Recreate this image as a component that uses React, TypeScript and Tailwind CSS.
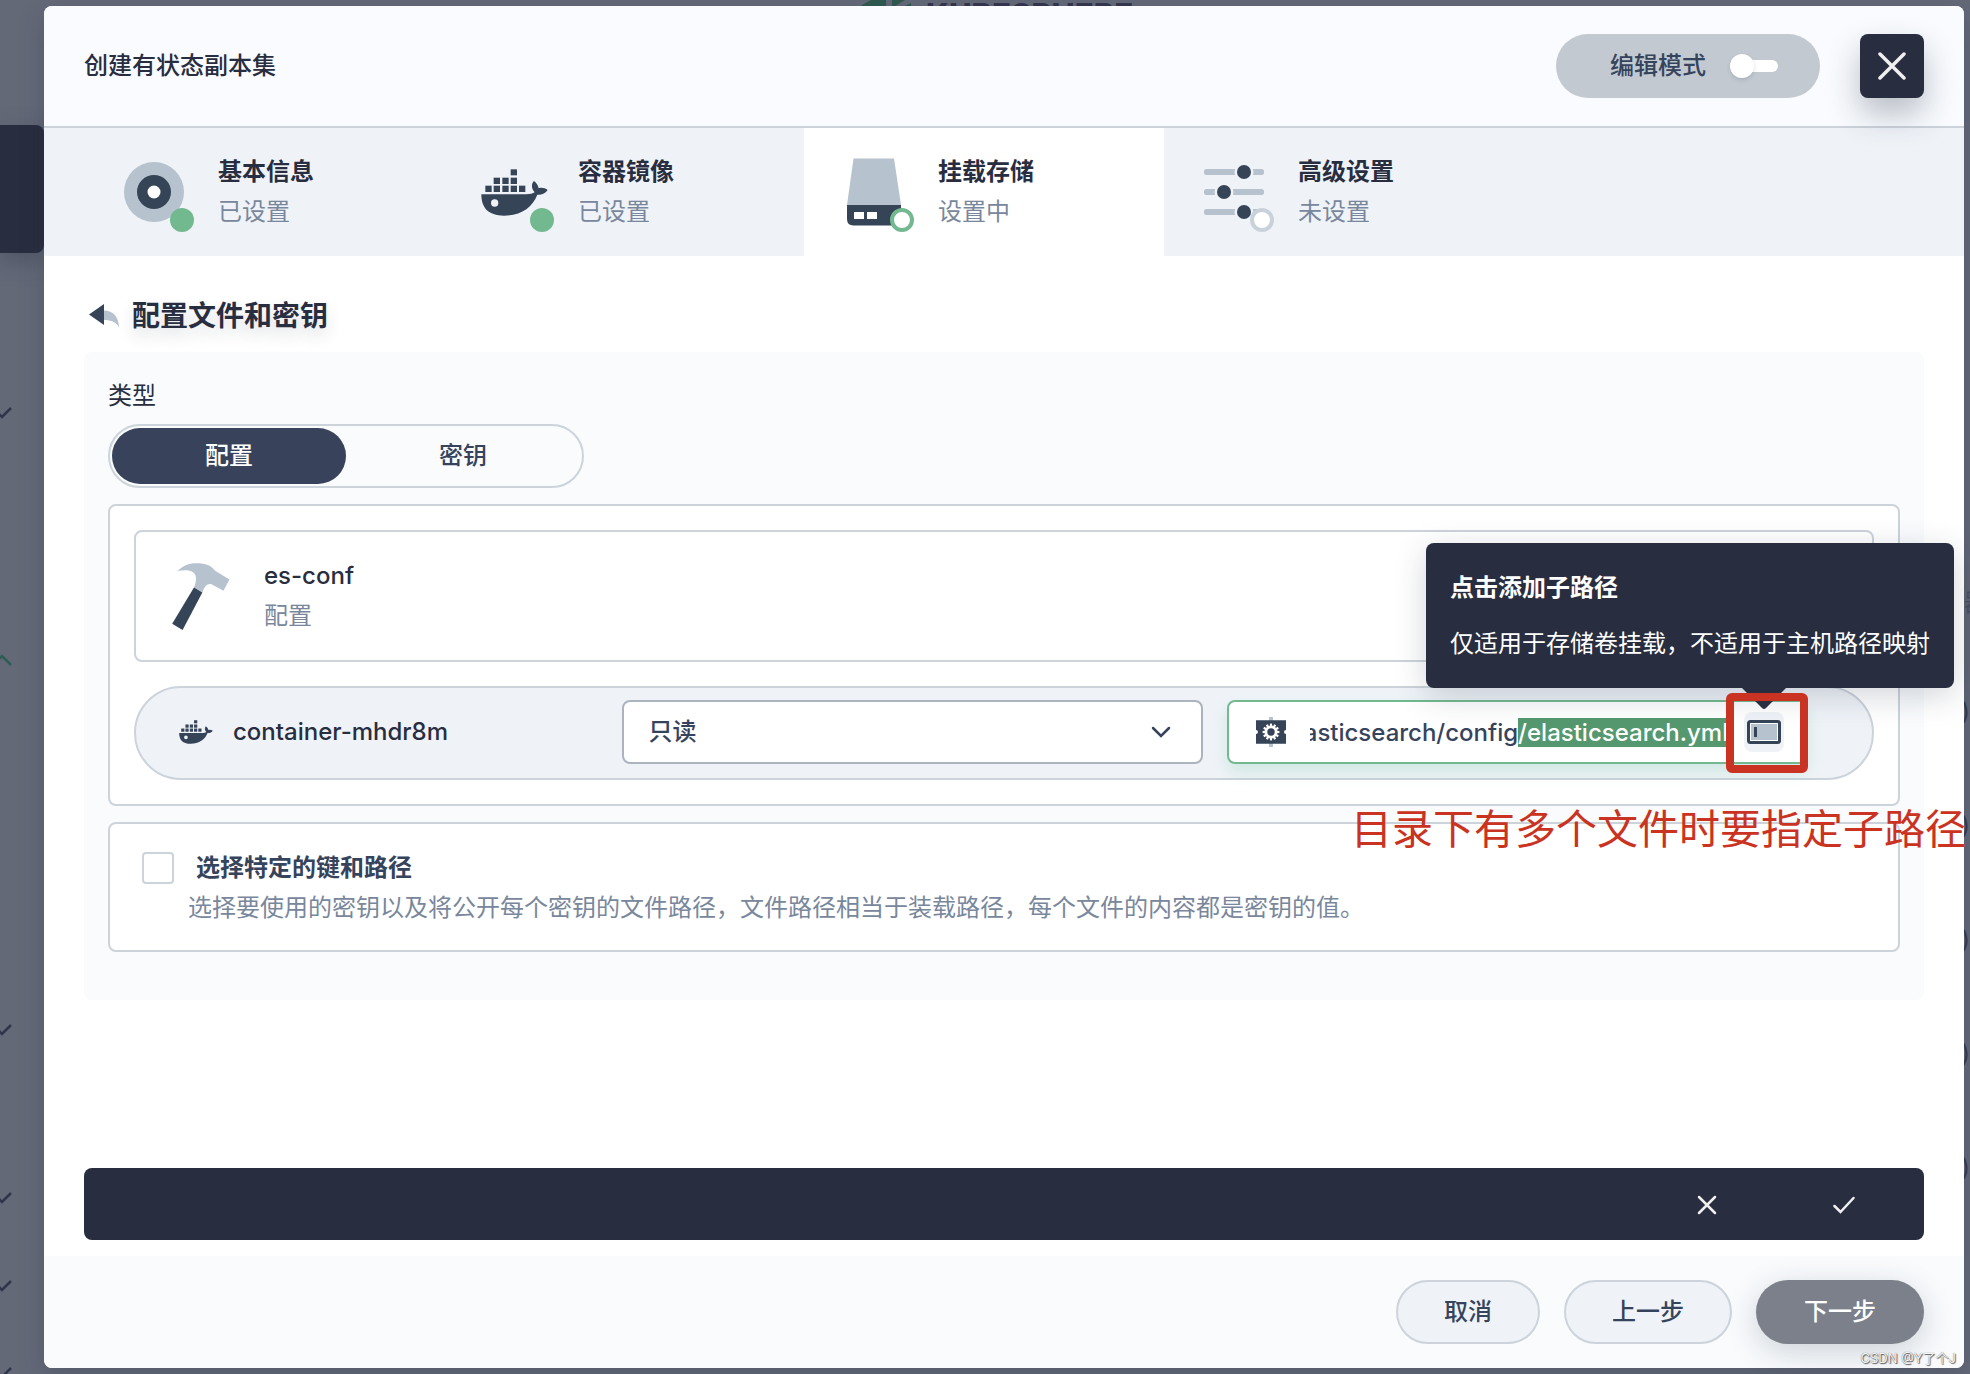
import { useEffect, useRef, useState } from "react";
import type { ReactNode } from "react";

function DockerIcon({ className }: { className?: string }) {
  return (
    <svg viewBox="61 86 201 141" className={className} fill="#364458" aria-hidden="true">
      <rect x="150" y="87" width="19" height="18" />
      {[99, 125, 150].map((x) => (
        <rect key={x} x={x} y="112" width="19" height="19" />
      ))}
      {[74, 99, 125, 150, 175].map((x) => (
        <rect key={x} x={x} y="136" width="19" height="19" />
      ))}
      <path
        fillRule="evenodd"
        d="M62 162H196C208 162 217 160 222 156C212 145 211 131 220 122C229 129 233 137 234 144C243 141 253 143 261 149C255 159 243 164 230 163C215 202 180 226 130 226C82 226 62 202 62 162ZM102 177a11 11 0 1 0 0 22a11 11 0 1 0 0-22Z"
      />
    </svg>
  );
}

function DiscIcon() {
  return (
    <svg viewBox="0 0 60 60" className="size-[60px]" aria-hidden="true">
      <circle cx="30" cy="30" r="30" fill="#b6c2cd" />
      <circle cx="30" cy="30" r="17" fill="#364458" />
      <circle cx="30" cy="30" r="6.5" fill="#fff" />
    </svg>
  );
}

function StorageIcon() {
  return (
    <svg viewBox="0 0 54 68" className="h-[68px] w-[54px]" aria-hidden="true">
      <path d="M6.5 0.5H47L54 47H0Z" fill="#b6c2cd" />
      <path d="M0 47H54V61Q54 67.5 47.500 67.500H6.500Q0 67.500 0 61Z" fill="#364458" />
      <rect x="7" y="54" width="10" height="7" fill="#fff" />
      <rect x="20" y="54" width="10" height="7" fill="#fff" />
    </svg>
  );
}

function SlidersIcon() {
  const rows = [
    { y: 7, x: 40 },
    { y: 27, x: 20 },
    { y: 47, x: 40 },
  ];
  return (
    <svg viewBox="0 0 60 54" className="h-[54px] w-[60px]" aria-hidden="true">
      {rows.map((r) => (
        <g key={r.y}>
          <rect x="0" y={r.y - 3} width="60" height="6" rx="2.500" fill="#b6c2cd" />
          <circle cx={r.x} cy={r.y} r="9.500" fill="#eff3f8" />
          <circle cx={r.x} cy={r.y} r="7" fill="#364458" />
        </g>
      ))}
    </svg>
  );
}

function BackIcon() {
  return (
    <svg viewBox="0 0 30 24" className="h-6 w-[30px]" aria-hidden="true">
      <path d="M15 6.500C24 6.500 30 13 30 23.500C27.500 18 22 16 15 16Z" fill="#b6c2cd" />
      <path d="M15 0V21L0 10.500Z" fill="#364458" />
    </svg>
  );
}

function HammerIcon() {
  return (
    <svg viewBox="38 38 172 200" className="h-[67px] w-[58px]" aria-hidden="true">
      <path
        d="M54 62C74 42 96 38 118 39C140 40 155 47 166 61L209 87L191 121L154 101C142 99 134 108 128 126L103 111C112 90 112 72 98 64C84 58 68 60 54 62Z"
        fill="#b6c2cd"
      />
      <path d="M103 111L128 126L69 238L38 219Z" fill="#364458" />
    </svg>
  );
}

function GearIcon() {
  const teeth = [0, 30, 60, 90, 120, 150];
  return (
    <svg viewBox="0 0 30 30" className="size-[30px] shrink-0" aria-hidden="true">
      <rect x="13" y="0" width="4" height="30" fill="#b6c2cd" />
      <path d="M0 3.300H30V13A2 2 0 0 0 30 17V26.700H0V17A2 2 0 0 0 0 13Z" fill="#364458" />
      {teeth.map((a) => (
        <rect
          key={a}
          x="13.900"
          y="6.600"
          width="2.200"
          height="16.800"
          fill="#fff"
          transform={`rotate(${a} 15 15)`}
        />
      ))}
      <circle cx="15" cy="15" r="6.500" fill="#fff" />
      <circle cx="15" cy="15" r="3.700" fill="#364458" />
    </svg>
  );
}

function SubPathIcon() {
  return (
    <svg viewBox="0 0 34 24" className="h-6 w-[34px]" aria-hidden="true">
      <rect x="1.500" y="1.500" width="31" height="21" rx="2" fill="#fff" stroke="#364458" strokeWidth="3" />
      <rect x="4" y="4" width="26" height="16" fill="#b6c2cd" />
      <rect x="7" y="7" width="3" height="10" fill="#364458" />
    </svg>
  );
}

type StepState = "done" | "current" | "todo";

function Step({ icon, title, status, state }: { icon: ReactNode; title: string; status: string; state: StepState }) {
  const dot = {
    done: "bg-[#72b98f]",
    current: "border-4 border-[#72b98f] bg-white",
    todo: "border-4 border-[#c9d1da] bg-white",
  }[state];
  return (
    <button
      type="button"
      className={`flex h-32 w-[360px] items-center gap-6 pl-[30px] text-left ${state === "current" ? "bg-white" : ""}`}
    >
      <span className="relative flex size-20 items-center justify-center">
        {icon}
        <span className={`absolute right-0 bottom-0 size-6 rounded-full ${dot}`} />
      </span>
      <span className="flex flex-col">
        <span className="h-10 text-2xl leading-10 font-semibold text-[#282d3f]">{title}</span>
        <span className="h-10 text-2xl leading-10 text-[#79879c]">{status}</span>
      </span>
    </button>
  );
}

function Backdrop() {
  return (
    <div className="absolute inset-0 overflow-hidden" aria-hidden="true">
      <div className="absolute top-[125px] left-0 h-32 w-11 rounded-r-lg bg-[#282d3f] shadow-[0_8px_24px_rgba(40,45,63,0.35)]" />
      {[413, 1030, 1198, 1286, 1373].map((y) => (
        <svg key={y} viewBox="0 0 20 12" className="absolute -left-2 h-3 w-5" style={{ top: y - 6 }}>
          <path d="M1 1L10 10L19 1" fill="none" stroke="#2f364b" strokeWidth="2.500" />
        </svg>
      ))}
      <svg viewBox="0 0 20 12" className="absolute top-[654px] -left-2 h-3 w-5">
        <path d="M1 11L10 2L19 11" fill="none" stroke="#2f5c54" strokeWidth="2.500" />
      </svg>
      <svg viewBox="0 0 50 6" className="absolute top-0 left-[862px] h-[6px] w-[50px]">
        <path d="M0 6V5L9 0H24V6Z" fill="#2f5950" />
        <path d="M30 6V0H43L33 6ZM43 6L49 3V6Z" fill="#2f5950" />
      </svg>
      <div className="absolute top-[-5px] left-[926px] font-[Inter] text-[31px] leading-10 font-extrabold text-[#34344e]">
        KUBESPHERE
      </div>
      {[712, 826, 940, 1054, 1168].map((y) => (
        <span
          key={y}
          className="absolute right-0 text-2xl leading-6 text-[#343a50]"
          style={{ top: y - 12 }}
        >
          )
        </span>
      ))}
      <span className="absolute top-[591px] right-[-18px] text-2xl leading-6 text-[#4c5265]">器</span>
    </div>
  );
}

function PathField() {
  const path = "/usr/share/elasticsearch/config/elasticsearch.yml";
  const [value, setValue] = useState(path);
  const ref = useRef<HTMLInputElement>(null);

  useEffect(() => {
    const el = ref.current;
    if (!el) return;
    el.focus({ preventScroll: true });
    el.setSelectionRange(path.lastIndexOf("/"), path.length);
    el.scrollLeft = el.scrollWidth;
  }, []);

  return (
    <div className="flex h-16 min-w-0 items-center rounded-lg border-2 border-[#72b98f] bg-white pr-[22px] pl-[27px] shadow-[0_8px_16px_rgba(85,188,138,0.2)]">
      <GearIcon />
      <input
        ref={ref}
        aria-label="挂载路径"
        value={value}
        onChange={(e) => setValue(e.target.value)}
        className="mr-4 ml-6 h-10 min-w-0 flex-1 bg-transparent text-2xl font-medium text-[#36435c] outline-none selection:bg-[#55986f] selection:text-white"
      />
      <div className="relative size-10 shrink-0">
        <button
          type="button"
          aria-label="点击添加子路径"
          className="flex size-10 items-center justify-center rounded-lg bg-[#eff3f8]"
        >
          <SubPathIcon />
        </button>
        <div
          role="tooltip"
          className="absolute right-[-170px] bottom-16 z-10 flex h-[145px] flex-col justify-center gap-4 rounded-lg bg-[#282d3f] px-6 text-2xl leading-10 whitespace-nowrap text-white shadow-[0_8px_32px_rgba(36,46,66,0.2)]"
        >
          <strong className="font-semibold">点击添加子路径</strong>
          <span>仅适用于存储卷挂载，不适用于主机路径映射</span>
        </div>
        <svg viewBox="0 0 44 22" className="absolute -top-6 -left-0.5 z-10 h-[22px] w-11" aria-hidden="true">
          <path d="M0 0H44L24 20Q22 22 20 20Z" fill="#282d3f" />
        </svg>
        <div className="absolute -top-[19px] -left-[18px] z-20 h-20 w-[82px] rounded-md border-8 border-[#ca3321]" />
        <p className="absolute top-[87px] right-[-182px] z-20 text-[41px] leading-[60px] whitespace-nowrap text-[#ca3321]">
          目录下有多个文件时要指定子路径
        </p>
      </div>
    </div>
  );
}

export default function App() {
  const [kind, setKind] = useState("config");
  return (
    <div className="relative flex min-h-screen flex-col overflow-x-clip bg-[#646978] pt-1.5 pr-1.5 pb-1.5 pl-11 font-[Inter,'Noto_Sans_CJK_SC',sans-serif] text-[#282d3f]">
      <Backdrop />
      <main className="relative flex flex-1 flex-col rounded-lg bg-white shadow-[0_8px_24px_rgba(36,46,66,0.25)]">
        <header className="flex items-center rounded-t-lg border-b-2 border-[#ccd3db] bg-[#f9fbfe] px-10 py-7">
          <h1 className="flex-1 text-2xl leading-10 font-medium">创建有状态副本集</h1>
          <label className="mr-10 flex h-16 items-center gap-6 rounded-full bg-[#c3c9d1] pr-[42px] pl-[54px] text-2xl font-medium text-[#36435c]">
            编辑模式
            <input type="checkbox" role="switch" className="sr-only" />
            <span className="relative flex h-6 w-12 items-center">
              <span className="ml-3 h-3 w-9 rounded-full bg-white" />
              <span className="absolute left-0 size-6 rounded-full bg-white shadow-[0_2px_4px_rgba(36,46,66,0.15)]" />
            </span>
          </label>
          <button
            type="button"
            aria-label="关闭"
            className="relative z-10 flex size-16 items-center justify-center rounded-lg bg-[#282d3f] shadow-[0_16px_32px_rgba(36,46,66,0.3)]"
          >
            <svg viewBox="0 0 28 28" className="size-7" aria-hidden="true">
              <path d="M2 2L26 26M26 2L2 26" stroke="#f0f0f0" strokeWidth="3.500" strokeLinecap="round" />
            </svg>
          </button>
        </header>

        <nav className="flex bg-[#eff3f8] pl-10">
          <Step icon={<DiscIcon />} title="基本信息" status="已设置" state="done" />
          <Step icon={<DockerIcon className="h-[47px] w-[67px]" />} title="容器镜像" status="已设置" state="done" />
          <Step icon={<StorageIcon />} title="挂载存储" status="设置中" state="current" />
          <Step icon={<SlidersIcon />} title="高级设置" status="未设置" state="todo" />
        </nav>

        <div className="flex flex-1 flex-col px-10 pt-10 pb-4">
          <div className="mb-4 flex items-center gap-[13px] pl-[5px]">
            <button type="button" aria-label="返回">
              <BackIcon />
            </button>
            <h2 className="text-[28px] leading-10 font-semibold [text-shadow:0_8px_16px_rgba(36,46,66,0.15)]">
              配置文件和密钥
            </h2>
          </div>

          <section className="rounded-lg bg-[#f9fbfd] px-6 pt-6 pb-12">
            <fieldset className="mb-4">
              <legend className="mb-2 text-2xl leading-10">类型</legend>
              <div className="flex h-16 w-fit rounded-full border-2 border-[#ccd3db] p-0.5">
                {[
                  { id: "config", label: "配置" },
                  { id: "secret", label: "密钥" },
                ].map((o) => (
                  <label
                    key={o.id}
                    className={`flex w-[234px] items-center justify-center rounded-full text-2xl font-medium ${
                      kind === o.id ? "bg-[#38425a] text-white" : "text-[#36435c]"
                    }`}
                  >
                    <input
                      type="radio"
                      name="kind"
                      className="sr-only"
                      checked={kind === o.id}
                      onChange={() => setKind(o.id)}
                    />
                    {o.label}
                  </label>
                ))}
              </div>
            </fieldset>

            <div className="mb-4 flex flex-col gap-6 rounded-lg border-2 border-[#ccd3db] bg-white p-6">
              <div className="flex h-[132px] items-center gap-[34px] rounded-lg border-2 border-[#ccd3db] pl-9">
                <HammerIcon />
                <div className="text-2xl leading-10">
                  <div className="font-medium">es-conf</div>
                  <div className="text-[#79879c]">配置</div>
                </div>
              </div>

              <div className="grid grid-cols-[13fr_18fr_18fr] items-center gap-6 rounded-full border-2 border-[#ccd3db] bg-[#eff3f8] pt-3 pr-16 pb-3.5 pl-[43px]">
                <div className="flex items-center gap-5">
                  <DockerIcon className="h-6 w-[34px]" />
                  <span className="text-2xl leading-10 font-medium">container-mhdr8m</span>
                </div>
                <div className="relative">
                  <select
                    aria-label="访问模式"
                    className="h-16 w-full appearance-none rounded-lg border-2 border-[#abb4be] bg-white px-6 text-2xl font-medium text-[#36435c]"
                  >
                    <option>只读</option>
                    <option>读写</option>
                  </select>
                  <svg
                    viewBox="0 0 20 12"
                    className="pointer-events-none absolute top-[26px] right-8 h-3 w-5"
                    aria-hidden="true"
                  >
                    <path d="M2 2L10 10L18 2" fill="none" stroke="#36435c" strokeWidth="2.500" strokeLinecap="round" />
                  </svg>
                </div>
                <PathField />
              </div>
            </div>

            <div className="rounded-lg border-2 border-[#ccd3db] bg-white px-8 pt-6 pb-[22px]">
              <div className="flex items-center gap-[22px]">
                <input
                  id="pick-keys"
                  type="checkbox"
                  className="size-8 appearance-none rounded-sm border-2 border-[#ccd3db] bg-white"
                />
                <label htmlFor="pick-keys" className="text-2xl leading-10 font-semibold text-[#36435c]">
                  选择特定的键和路径
                </label>
              </div>
              <p className="ml-[46px] text-2xl leading-10 text-[#79879c]">
                选择要使用的密钥以及将公开每个密钥的文件路径，文件路径相当于装载路径，每个文件的内容都是密钥的值。
              </p>
            </div>
          </section>

          <div className="mt-auto flex h-[72px] justify-end rounded-lg bg-[#282d3f] pt-0.5 pr-3">
            <button type="button" aria-label="放弃" className="flex w-[137px] items-center justify-center">
              <svg viewBox="0 0 20 20" className="size-5" aria-hidden="true">
                <path d="M2 2L18 18M18 2L2 18" stroke="#f0f0f0" strokeWidth="2.500" strokeLinecap="round" />
              </svg>
            </button>
            <button type="button" aria-label="确认" className="flex w-[137px] items-center justify-center">
              <svg viewBox="0 0 22 18" className="h-[18px] w-[22px]" aria-hidden="true">
                <path
                  d="M1.500 10L7.500 16L20.500 2"
                  fill="none"
                  stroke="#f0f0f0"
                  strokeWidth="2.500"
                  strokeLinecap="round"
                />
              </svg>
            </button>
          </div>
        </div>

        <footer className="relative flex justify-end gap-6 rounded-b-lg bg-[#f9fbfd] px-10 py-6 text-2xl font-medium">
          <button
            type="button"
            className="h-16 rounded-full border-2 border-[#ccd3db] bg-[#eff3f8] px-[46px] text-[#36435c]"
          >
            取消
          </button>
          <button
            type="button"
            className="h-16 rounded-full border-2 border-[#ccd3db] bg-[#eff3f8] px-[46px] text-[#36435c]"
          >
            上一步
          </button>
          <button
            type="button"
            className="h-16 rounded-full bg-[#7c808b] px-12 text-white shadow-[0_8px_32px_rgba(36,46,66,0.2)]"
          >
            下一步
          </button>
          <span className="absolute right-2 bottom-0 text-[13px] leading-5 font-normal text-[#f5f5f5] [text-shadow:1px_1px_1px_rgba(0,0,0,0.6),0_0_1px_rgba(0,0,0,0.6)]">
            CSDN @Y了个J
          </span>
        </footer>
      </main>
    </div>
  );
}
